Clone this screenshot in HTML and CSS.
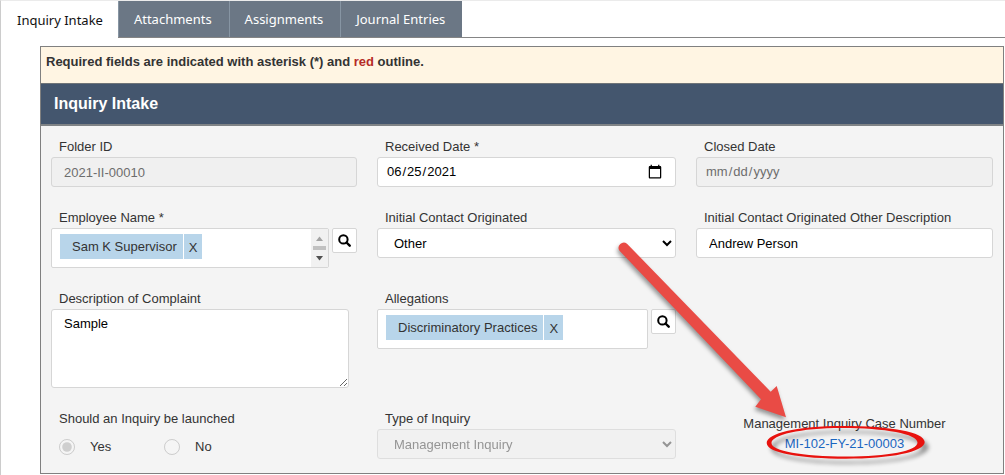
FILE: index.html
```html
<!DOCTYPE html>
<html lang="en">
<head>
<meta charset="utf-8">
<title>Inquiry Intake</title>
<link rel="stylesheet" href="styles.css">
</head>
<body>
<div class="page">
  <nav class="tabs">
    <button class="tab tab-active" type="button">Inquiry Intake</button>
    <button class="tab" type="button">Attachments</button>
    <button class="tab" type="button">Assignments</button>
    <button class="tab" type="button">Journal Entries</button>
  </nav>
  <main class="panel">
    <p class="notice">Required fields are indicated with asterisk (*) and <span class="red">red</span> outline.</p>
    <h1 class="title">Inquiry Intake</h1>
    <form class="form">
      <div class="field">
        <label class="label" for="folder">Folder ID</label>
        <input class="control" id="folder" type="text" value="2021-II-00010" disabled>
      </div>
      <div class="field">
        <label class="label" for="received">Received Date *</label>
        <input class="control control-date" id="received" type="date" value="2021-06-25">
      </div>
      <div class="field">
        <label class="label" for="closed">Closed Date</label>
        <input class="control control-date" id="closed" type="date" disabled>
      </div>

      <div class="field">
        <span class="label" id="employee-label">Employee Name *</span>
        <div class="lookup" role="group" aria-labelledby="employee-label">
          <div class="picker">
            <span class="chip"><span class="chip-text">Sam K Supervisor</span><button class="chip-x" type="button">X</button></span>
            <svg class="scroller" viewBox="0 0 17 38" aria-hidden="true">
              <path fill="#f1f1f1" d="M0 0h17v38H0z"/>
              <path fill="#a3a3a3" d="M5 12h7L8.500 7.500z"/>
              <path fill="#c1c1c1" d="M2 17h13v4H2z"/>
              <path fill="#505050" d="M5 27h7l-3.500 4.500z"/>
            </svg>
          </div>
          <button class="search" type="button" aria-label="Search employees">
            <svg viewBox="0 0 13 13"><circle cx="5.400" cy="5.400" r="4.200" fill="none" stroke="#000" stroke-width="2"/><path d="M8.500 8.500l3.200 3.200" stroke="#000" stroke-width="2.400" stroke-linecap="round"/></svg>
          </button>
        </div>
      </div>
      <div class="field">
        <label class="label" for="contact">Initial Contact Originated</label>
        <select class="control" id="contact"><option>Other</option></select>
      </div>
      <div class="field">
        <label class="label" for="contact-other">Initial Contact Originated Other Description</label>
        <input class="control" id="contact-other" type="text" value="Andrew Person">
      </div>

      <div class="field">
        <label class="label" for="complaint">Description of Complaint</label>
        <textarea class="control control-area" id="complaint">Sample</textarea>
      </div>
      <div class="field">
        <span class="label" id="allegations-label">Allegations</span>
        <div class="lookup" role="group" aria-labelledby="allegations-label">
          <div class="picker">
            <span class="chip"><span class="chip-text">Discriminatory Practices</span><button class="chip-x" type="button">X</button></span>
          </div>
          <button class="search" type="button" aria-label="Search allegations">
            <svg viewBox="0 0 13 13"><circle cx="5.400" cy="5.400" r="4.200" fill="none" stroke="#000" stroke-width="2"/><path d="M8.500 8.500l3.200 3.200" stroke="#000" stroke-width="2.400" stroke-linecap="round"/></svg>
          </button>
        </div>
      </div>
      <div class="field"></div>

      <div class="field">
        <span class="label" id="launch-label">Should an Inquiry be launched</span>
        <div class="radios" role="radiogroup" aria-labelledby="launch-label">
          <label class="choice"><input class="radio" type="radio" name="launch" checked disabled>Yes</label>
          <label class="choice"><input class="radio" type="radio" name="launch" disabled>No</label>
        </div>
      </div>
      <div class="field">
        <label class="label" for="type">Type of Inquiry</label>
        <select class="control" id="type" disabled><option>Management Inquiry</option></select>
      </div>
      <div class="case">
        <span>Management Inquiry Case Number</span>
        <a class="case-link" href="#">MI-102-FY-21-00003</a>
        <svg class="callout" viewBox="604 230 400 240" aria-hidden="true">
          <path class="callout-arrow" d="M627 243.700L770.700 391.700L776.700 386L786 417.300L755.300 406.700L761 399.300L619.500 250.700A5.200 5.200 0 0 1 627 243.700Z"/>
          <path class="callout-ring" fill-rule="evenodd" d="M766.700 443C766.700 433 798 426 842 426C890 426 924.700 432 924.700 442C924.700 452 890 458.700 846 458.700C800 458.700 766.700 453 766.700 443ZM771.500 443C771.500 451 802 456.500 846 456.500C888 456.500 917.500 451 917.500 442.500C917.500 434 885 428 842 428C800 428 771.500 435 771.500 443Z"/>
        </svg>
      </div>
    </form>
  </main>
</div>
</body>
</html>
```
FILE: styles.css
```css
* {
  box-sizing: border-box;
}

body {
  margin: 0;
  background: #fff;
  color: #333;
  font: 13px/20px "Liberation Sans", Arial, sans-serif;
}

button, input, select, textarea {
  margin: 0;
  font: inherit;
  color: #000;
}

.page {
  min-height: 100vh;
  border-top: 1px solid #ebebeb;
  border-left: 1px solid #ccc;
}

.tabs {
  display: flex;
  height: 37px;
  border-bottom: 1px solid #858585;
}

.tab {
  height: 36px;
  padding: 0 17px 0 15px;
  border: 0;
  border-left: 1px solid #8795a3;
  background: #6b7785;
  color: #fff;
  font: 13px/20px "Noto Sans", "Segoe UI", sans-serif;
}

.tab-active {
  height: 37px;
  padding: 0 15px 0 16px;
  border-left: 0;
  background: #fff;
  color: #111;
}

.panel {
  margin: 8px 1px 0 39px;
  border: 1px solid #808080;
  background: #f4f4f4;
}

.notice {
  margin: 0;
  padding: 5px 5px 11px;
  background: #fff5e3;
  font-weight: bold;
}

.red {
  color: #b52b27;
}

.title {
  margin: 0;
  padding: 10px 13px;
  border-top: 1px solid #6f7478;
  border-bottom: 2px solid #7f8386;
  background: #44566e;
  color: #fff;
  font-size: 16px;
  line-height: 20px;
}

.form {
  display: grid;
  grid-template-columns: 306fr 299fr 297fr;
  gap: 21px 20px;
  padding: 11px 10px 14px;
}

.field {
  min-width: 0;
}

.label {
  display: block;
  padding-left: 8px;
}

.control {
  display: block;
  width: 100%;
  height: 30px;
  padding: 0 12px;
  border: 1px solid #d6d6d6;
  border-radius: 3px;
  background: #fff;
}

select.control {
  padding-right: 0;
}

.control:disabled {
  background: #f0f0f0;
  color: #6d6d6d;
}

.control-date {
  padding-left: 8px;
}

.control-date::-webkit-calendar-picker-indicator {
  width: 16px;
  height: 16px;
  padding: 0;
}

.control-date:disabled::-webkit-calendar-picker-indicator {
  display: none;
}

.control-area {
  width: calc(100% - 8px);
  height: 79px;
  padding-top: 4px;
}

.lookup {
  display: flex;
  align-items: flex-start;
  gap: 3px;
}

.picker {
  display: flex;
  flex: 1;
  align-items: flex-start;
  justify-content: space-between;
  height: 40px;
  border: 1px solid #d6d6d6;
  border-radius: 2px;
  background: #fff;
}

.chip {
  display: flex;
  gap: 1px;
  margin: 5px 0 0 8px;
  line-height: 25px;
}

.chip-text {
  padding: 0 6px 0 12px;
  background: #b8d5ea;
}

.chip-x {
  height: 25px;
  padding: 1px 5px 0;
  border: 0;
  background: #b8d5ea;
  color: #333;
}

.scroller {
  width: 17px;
  height: 38px;
}

.search {
  display: flex;
  align-items: center;
  justify-content: center;
  width: 25px;
  height: 25px;
  padding: 0;
  border: 1px solid #d6d6d6;
  border-radius: 2px;
  background: #fff;
}

.search svg {
  width: 13px;
  height: 13px;
}

.radios {
  display: flex;
  padding: 8px 0 0 8px;
}

.choice {
  display: flex;
  align-items: center;
  gap: 15px;
  width: 105px;
}

.radio {
  width: 16px;
  height: 16px;
}

.case {
  position: relative;
  display: flex;
  flex-direction: column;
  align-items: center;
  padding-top: 5px;
}

.case-link {
  color: #1a66c0;
  text-decoration: none;
}

.callout {
  position: absolute;
  top: -179px;
  left: 50%;
  width: 400px;
  height: 240px;
  margin-left: -241px;
  pointer-events: none;
}

.callout-arrow {
  fill: #e94b45;
  filter: drop-shadow(-1px 3px 2px rgba(0, 0, 0, 0.4));
}

.callout-ring {
  fill: #e8120e;
  filter: drop-shadow(4px 5px 2px rgba(0, 0, 0, 0.4));
}
```
